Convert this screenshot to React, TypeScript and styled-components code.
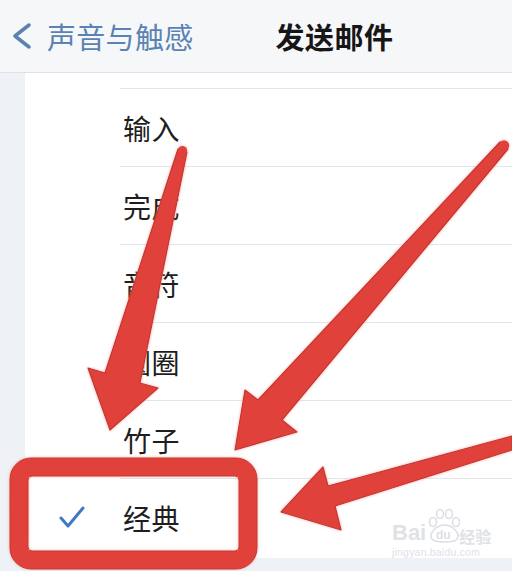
import React from 'react';
import styled, { createGlobalStyle } from 'styled-components';

const GlobalStyle = createGlobalStyle`
  html, body {
    margin: 0;
    padding: 0;
    background: #ffffff;
  }
  body {
    font-family: "Noto Sans CJK SC", "Noto Sans", sans-serif;
    -webkit-font-smoothing: antialiased;
  }
`;

const Screen = styled.div`
  position: relative;
  width: 512px;
  height: 571px;
  overflow: hidden;
  background: #eef1f5;
  display: flex;
  flex-direction: column;
`;

const NavBar = styled.header`
  height: 72px;
  flex-shrink: 0;
  display: flex;
  align-items: center;
  padding-left: 12px;
  background: #f6f7f9;
  border-bottom: 1px solid #dfe1e5;
`;

const BackButton = styled.div`
  display: flex;
  align-items: center;
  gap: 15px;
  color: #5a83b3;
  font-size: 29px;
  line-height: 1;
  letter-spacing: 0.3px;
`;

const Title = styled.h1`
  margin: 0 0 0 82px;
  font-size: 29px;
  font-weight: 700;
  color: #161616;
  line-height: 1;
  letter-spacing: 0.5px;
`;

const Body = styled.main`
  flex: 1;
  display: flex;
`;

const Gutter = styled.div`
  width: 25px;
  flex-shrink: 0;
  background: #eef1f5;
`;

const Card = styled.section`
  flex: 1;
  align-self: flex-start;
  background: #ffffff;
  padding-top: 15px;
  padding-bottom: 2px;
`;

const Row = styled.div`
  display: flex;
  height: 78px;
`;

const CheckCell = styled.div`
  width: 95px;
  flex-shrink: 0;
  display: flex;
  align-items: center;
  padding-left: 34px;
  box-sizing: border-box;
`;

const Label = styled.div`
  flex: 1;
  display: flex;
  align-items: center;
  padding-left: 3px;
  border-top: 1px solid #e4e5e8;
  font-size: 28px;
  color: #1e1e1e;
  letter-spacing: 0.5px;
`;

const Overlay = styled.svg`
  position: absolute;
  left: 0;
  top: 0;
  width: 512px;
  height: 571px;
  pointer-events: none;
`;

const Watermark = styled.div`
  position: absolute;
  left: 392px;
  top: 508px;
  display: flex;
  flex-direction: column;
  align-items: flex-start;
  color: #e0e2e6;
  font-family: "Liberation Sans", Arial, sans-serif;
  pointer-events: none;
`;

const BrandLine = styled.div`
  display: flex;
  align-items: flex-end;
  font-size: 22px;
  font-weight: 700;
  line-height: 1;
`;

const BrandCn = styled.span`
  font-family: "Noto Sans CJK SC", sans-serif;
  font-size: 16px;
  font-weight: 700;
  margin-left: -3px;
`;

const Url = styled.div`
  font-size: 10.5px;
  margin-top: 2px;
  letter-spacing: 0.2px;
`;

const items = ['输入', '完成', '音符', '圆圈', '竹子', '经典'];

function Check() {
  return (
    <svg width="26" height="24" viewBox="0 0 26 24">
      <polyline
        points="2,13 9,21 24,3"
        fill="none"
        stroke="#3f78c4"
        strokeWidth="3"
        strokeLinecap="round"
        strokeLinejoin="round"
      />
    </svg>
  );
}

function Chevron() {
  return (
    <svg width="20" height="26" viewBox="0 0 20 26">
      <polyline
        points="17,2 3,13 17,24"
        fill="none"
        stroke="#5a83b3"
        strokeWidth="3.5"
        strokeLinecap="round"
        strokeLinejoin="round"
      />
    </svg>
  );
}

function Paw() {
  return (
    <svg width="36" height="36" viewBox="0 0 36 36">
      <g fill="none" stroke="#dcdfe3" strokeWidth="1.6">
        <ellipse cx="7" cy="14" rx="3.5" ry="4.5" />
        <ellipse cx="14" cy="6" rx="3.5" ry="4.5" />
        <ellipse cx="23" cy="6" rx="3.5" ry="4.5" />
        <ellipse cx="30" cy="14" rx="3.5" ry="4.5" />
        <path d="M6 31 C2 25 11 17 18.5 17 C26 17 35 25 31 31 C28 35 9 35 6 31 Z" />
      </g>
      <text x="10" y="31" fontSize="12" fontWeight="700" fill="#dcdfe3" fontFamily="Liberation Sans, sans-serif">
        du
      </text>
    </svg>
  );
}

export default function App() {
  return (
    <>
      <GlobalStyle />
      <Screen>
        <NavBar>
          <BackButton>
            <Chevron />
            <span>声音与触感</span>
          </BackButton>
          <Title>发送邮件</Title>
        </NavBar>
        <Body>
          <Gutter />
          <Card>
            {items.map((item) => (
              <Row key={item}>
                <CheckCell>{item === '经典' && <Check />}</CheckCell>
                <Label>{item}</Label>
              </Row>
            ))}
          </Card>
        </Body>

        <Watermark>
          <BrandLine>
            <span>Bai</span>
            <Paw />
            <BrandCn>经验</BrandCn>
          </BrandLine>
          <Url>jingyan.baidu.com</Url>
        </Watermark>

        <Overlay viewBox="0 0 512 571">
          <defs>
            <filter id="halo" x="-10%" y="-10%" width="120%" height="120%">
              <feDropShadow dx="0" dy="0" stdDeviation="1.6" floodColor="#f09088" floodOpacity="0.7" />
            </filter>
          </defs>
          <g filter="url(#halo)" fill="#e0433b" stroke="#c6352f" strokeWidth="1.2" strokeLinejoin="round">
            <polygon points="178,149 187,152 140,383 158,388 110,430 88,368 105,373" />
            <circle cx="182.5" cy="150.5" r="4.6" stroke="none" />
            <polygon points="500,142 508,149 282,420 297,432 235,450 245,390 258,400" />
            <circle cx="504" cy="145.5" r="5.2" stroke="none" />
            <polygon points="512,436 512,450 335,506 341,530 281,512 323,467 328,486" />
            <rect x="19" y="467" width="229" height="93" rx="12" fill="none" stroke="#e0433b" strokeWidth="18" />
            <rect x="10" y="458" width="247" height="111" rx="21" fill="none" stroke="#c6352f" strokeWidth="1" />
            <rect x="28" y="476" width="211" height="75" rx="4" fill="none" stroke="#c6352f" strokeWidth="1" />
          </g>
        </Overlay>
      </Screen>
    </>
  );
}
